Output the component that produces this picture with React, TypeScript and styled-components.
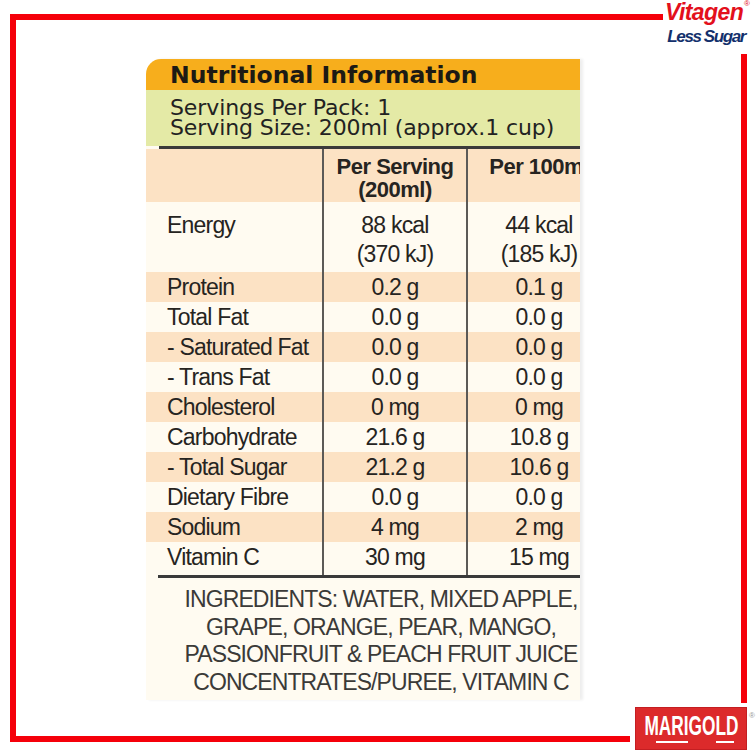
import React from "react";
import styled, { createGlobalStyle } from "styled-components";

const Global = createGlobalStyle`
  html, body { margin: 0; padding: 0; background: #fff; }
  * { box-sizing: border-box; }
`;

const Page = styled.div`
  position: relative;
  width: 756px;
  height: 756px;
  background: #fff;
  overflow: hidden;
  padding: 14px 0 0 10px;
`;

const Frame = styled.div`
  width: 737px;
  height: 728px;
  border: 6px solid #f5000a;
  padding: 39px 0 0 130px;
`;

const Panel = styled.div`
  width: 434px;
  overflow: hidden;
  border-top-left-radius: 15px;
  background: #fffbf1;
  box-shadow: 3px 0 3px rgba(0, 0, 0, 0.07);
`;

const Title = styled.div`
  height: 31px;
  padding: 2px 0 0 24px;
  background: #f7ae1c;
  font-family: "DejaVu Sans", sans-serif;
  font-weight: 700;
  font-size: 23.5px;
  line-height: 29px;
  color: #1c1a14;
  white-space: nowrap;
`;

const Servings = styled.div`
  height: 56px;
  padding: 8px 0 0 24px;
  background: #e4eaa6;
  font-family: "DejaVu Sans", sans-serif;
  font-size: 22px;
  line-height: 19.5px;
  letter-spacing: -0.1px;
  color: #222;
  white-space: nowrap;
`;

const Rule = styled.div<{ $inset: number }>`
  height: 3px;
  margin-left: ${(p) => p.$inset}px;
  background: #3a3a3a;
`;

const Row = styled.div<{ $bg: string; $h: number }>`
  display: grid;
  grid-template-columns: 176px 144px 144px;
  width: 464px;
  height: ${(p) => p.$h}px;
  background: ${(p) => p.$bg};
  font-family: "Liberation Sans", Arial, sans-serif;
  font-size: 23px;
  line-height: 30px;
  letter-spacing: -0.8px;
  color: #262421;
`;

const Cell = styled.div<{ $divider?: boolean; $top?: number }>`
  padding-top: ${(p) => p.$top ?? 0}px;
  border-left: ${(p) => (p.$divider ? "2px solid #5c5a57" : "none")};
  text-align: ${(p) => (p.$divider ? "center" : "left")};
  padding-left: ${(p) => (p.$divider ? 0 : 21)}px;
  white-space: nowrap;
`;

const HeadCell = styled(Cell)`
  font-weight: 700;
  font-size: 22px;
  line-height: 23px;
  letter-spacing: -0.5px;
`;

const TwoLine = styled(Cell)`
  line-height: 29px;
`;

const Ingredients = styled.div`
  height: 122px;
  padding: 8px 0 0 36px;
  font-family: "Liberation Sans", Arial, sans-serif;
  font-size: 23px;
  line-height: 27.7px;
  letter-spacing: -0.9px;
  color: #3b3a38;
  text-align: center;
  white-space: nowrap;
`;

const VitagenLogo = styled.div`
  position: absolute;
  top: 0;
  right: 0;
  width: 93px;
  height: 54px;
  background: #fff;
  font-family: "Liberation Sans", Arial, sans-serif;
  font-style: italic;
  font-weight: 700;
`;

const BrandLine = styled.div<{ $color: string; $size: number; $pr: number; $mt: number; $ls: number }>`
  display: flex;
  justify-content: flex-end;
  align-items: flex-start;
  margin-top: ${(p) => p.$mt}px;
  padding-right: ${(p) => p.$pr}px;
  color: ${(p) => p.$color};
  font-size: ${(p) => p.$size}px;
  line-height: ${(p) => p.$size + 2}px;
  letter-spacing: ${(p) => p.$ls}px;
`;

const Reg = styled.span<{ $color: string }>`
  font-size: 8px;
  line-height: 8px;
  font-style: normal;
  font-weight: 400;
  letter-spacing: 0;
  color: ${(p) => p.$color};
  margin-left: 1px;
`;

const MarigoldBox = styled.div`
  position: absolute;
  left: 630px;
  top: 703px;
  right: 0;
  bottom: 0;
  background: #fff;
  display: flex;
  align-items: flex-start;
  padding: 4px 0 0 5px;
`;

const Badge = styled.div`
  width: 112px;
  height: 43px;
  background: #dc2a2b;
  border: 1px solid #c41e22;
  display: flex;
  flex-direction: column;
  align-items: center;
  padding-top: 5px;
`;

const BadgeText = styled.div`
  font-family: "Liberation Sans", Arial, sans-serif;
  font-weight: 700;
  font-size: 27px;
  line-height: 27px;
  color: #fff;
  transform: scaleX(0.64);
  white-space: nowrap;
`;

const MarigoldReg = styled.span`
  font-family: "Liberation Sans", Arial, sans-serif;
  font-size: 8px;
  color: #999;
  margin: 4px 0 0 2px;
`;

const PEACH = "#fce2c4";
const CREAM = "#fffbf1";

const rows: [string, string, string][] = [
  ["Protein", "0.2 g", "0.1 g"],
  ["Total Fat", "0.0 g", "0.0 g"],
  ["- Saturated Fat", "0.0 g", "0.0 g"],
  ["- Trans Fat", "0.0 g", "0.0 g"],
  ["Cholesterol", "0 mg", "0 mg"],
  ["Carbohydrate", "21.6 g", "10.8 g"],
  ["- Total Sugar", "21.2 g", "10.6 g"],
  ["Dietary Fibre", "0.0 g", "0.0 g"],
  ["Sodium", "4 mg", "2 mg"],
  ["Vitamin C", "30 mg", "15 mg"],
];

const ingredients = [
  "INGREDIENTS: WATER, MIXED APPLE,",
  "GRAPE, ORANGE, PEAR, MANGO,",
  "PASSIONFRUIT & PEACH FRUIT JUICE",
  "CONCENTRATES/PUREE, VITAMIN C",
];

export default function App() {
  return (
    <Page>
      <Global />
      <Frame>
        <Panel>
          <Title>Nutritional Information</Title>
          <Servings>
            <div>Servings Per Pack: 1</div>
            <div>Serving Size: 200ml (approx.1 cup)</div>
          </Servings>
          <Rule $inset={13} />
          <Row $bg={PEACH} $h={53}>
            <HeadCell />
            <HeadCell $divider $top={6}>
              <div>Per Serving</div>
              <div>(200ml)</div>
            </HeadCell>
            <HeadCell $divider $top={6}>
              <div>Per 100ml</div>
            </HeadCell>
          </Row>
          <Row $bg={CREAM} $h={70}>
            <TwoLine $top={9}>Energy</TwoLine>
            <TwoLine $divider $top={9}>
              <div>88 kcal</div>
              <div>(370 kJ)</div>
            </TwoLine>
            <TwoLine $divider $top={9}>
              <div>44 kcal</div>
              <div>(185 kJ)</div>
            </TwoLine>
          </Row>
          {rows.map(([label, a, b], i) => (
            <Row key={label} $bg={i % 2 === 0 ? PEACH : CREAM} $h={i === rows.length - 1 ? 33 : 30}>
              <Cell>{label}</Cell>
              <Cell $divider>{a}</Cell>
              <Cell $divider>{b}</Cell>
            </Row>
          ))}
          <Rule $inset={12} />
          <Ingredients>
            {ingredients.map((l) => (
              <div key={l}>{l}</div>
            ))}
          </Ingredients>
        </Panel>
      </Frame>

      <VitagenLogo>
        <BrandLine $color="#e3101c" $size={23} $pr={6} $mt={0} $ls={-0.6}>
          Vitagen<Reg $color="#e3101c">®</Reg>
        </BrandLine>
        <BrandLine $color="#13306c" $size={17} $pr={11} $mt={2} $ls={-1.4}>
          Less Sugar
        </BrandLine>
      </VitagenLogo>

      <MarigoldBox>
        <Badge>
          <BadgeText>MARIGOLD</BadgeText>
          <svg width="90" height="4" viewBox="0 0 90 4">
            <line x1="10" y1="2" x2="42" y2="2" stroke="#fff" strokeWidth="2" />
            <line x1="70" y1="2" x2="88" y2="2" stroke="#fff" strokeWidth="2" />
          </svg>
        </Badge>
        <MarigoldReg>®</MarigoldReg>
      </MarigoldBox>
    </Page>
  );
}
